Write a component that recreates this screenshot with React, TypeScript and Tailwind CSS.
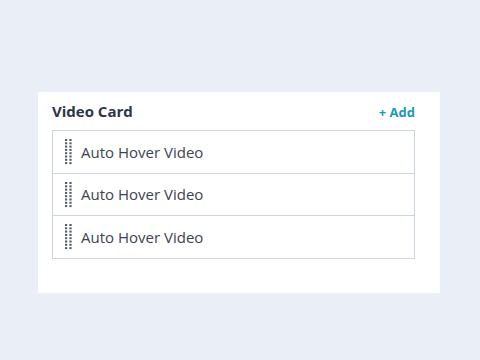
function Grip() {
  return (
    <svg width="8" height="26" viewBox="0 0 8 26" className="flex-shrink-0 text-[#525c6b]">
      {Array.from({ length: 8 }).map((_, i) => (
        <g key={i} fill="currentColor">
          <rect x="0" y={i * 3.3} width="2.2" height="2" />
          <rect x="4.4" y={i * 3.3} width="2.2" height="2" />
        </g>
      ))}
    </svg>
  );
}

const items = ["Auto Hover Video", "Auto Hover Video", "Auto Hover Video"];

export default function App() {
  return (
    <div
      className="flex h-[360px] w-[480px] bg-[#eaeef7] pl-[38px] pt-[92px]"
      style={{ fontFamily: '"Open Sans", sans-serif' }}
    >
      <div className="flex h-[201px] w-[402px] flex-col bg-white px-[14px] pt-[6px]">
        {/* Header */}
        <div className="flex h-[26px] w-[363px] items-center justify-between">
          <span className="mt-[1px] text-[15px] font-bold text-[#2d3646]">Video Card</span>
          <span className="mt-[4px] text-[13px] font-bold text-[#1a9ab8]">+ Add</span>
        </div>

        {/* List */}
        <div className="mt-[6px] flex w-[363px] flex-col border border-[#cbd4e1]">
          {items.map((label, i) => (
            <div
              key={i}
              className={`flex items-center gap-[8px] pl-[12px] ${
                i === 0 ? "h-[42px]" : i === 1 ? "h-[42px] border-t border-[#cbd4e1]" : "h-[43px] border-t border-[#cbd4e1]"
              }`}
            >
              <Grip />
              <span className="text-[15px] text-[#3b4452]">{label}</span>
            </div>
          ))}
        </div>
      </div>
    </div>
  );
}
